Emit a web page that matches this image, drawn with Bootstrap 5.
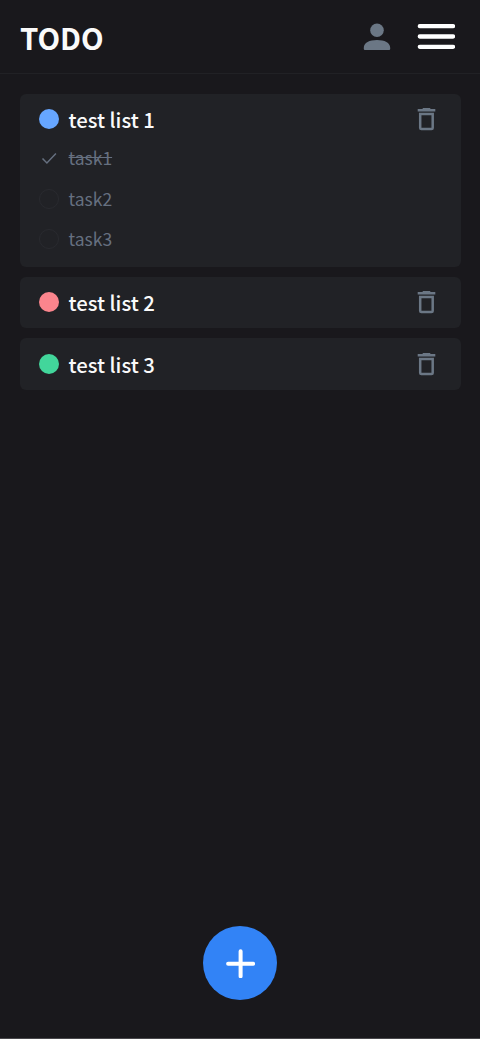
<!DOCTYPE html>
<html lang="en">
<head>
<meta charset="utf-8">
<meta name="viewport" content="width=device-width, initial-scale=1">
<title>TODO</title>
<link href="https://cdn.jsdelivr.net/npm/bootstrap@5.3.0/dist/css/bootstrap.min.css" rel="stylesheet">
<style>
body{background:#19181c;color:#fafafa;font-family:"Noto Sans CJK JP",sans-serif;line-height:1}
.app{height:1039px;border-bottom:1px solid #48474b}
.topbar{height:74px;padding:0 25px 0 20px;border-bottom:1px solid #212125}
.brand{font-size:29.4px;font-weight:700;line-height:40px;margin-top:1px}
.lists{padding:20px 19px 0 20px;gap:10px}
.todo{background:#212226;border-radius:6px;padding:0 22px 0 19px}
.todo-head{height:51px;gap:9.5px}
.todo-last,.todo-last .todo-head{height:52px}
.todo-title{font-size:20.3px;font-weight:500;line-height:30px;margin-top:-1px}
.todo-last .todo-title{margin-top:0}
.dot{width:20px;height:20px;border-radius:50%;flex:none}
.todo-head .dot{margin-top:-1px}
.ring{border:1px solid #292a2f}
.task{height:40.5px;gap:9.5px;font-size:17.500px;color:#667080}
.task-text{line-height:28px}
.trash{color:#6b7785;margin-top:-3px}
.fab{width:74px;height:74px;background:#3283f6;margin-bottom:38px}
.fab:hover{background:#3283f6}
</style>
</head>
<body>
<div class="app d-flex flex-column">
  <header class="topbar d-flex align-items-center justify-content-between">
    <h1 class="brand mb-0">TODO</h1>
    <div class="d-flex align-items-center">
      <svg width="28" height="28" viewBox="0 0 28 28" fill="#6b7785" style="margin-right:26px" aria-label="Account"><circle cx="14" cy="7.2" r="6.8"/><path d="M.8 24.8C.8 19.7 6.5 17 14 17s13.200 2.700 13.200 7.800v1.100q0 1.100-1.100 1.100H1.900q-1.100 0-1.100-1.100z"/></svg>
      <svg width="38" height="28" viewBox="0 0 38 28" stroke="#fff" stroke-width="4.300" stroke-linecap="round" aria-label="Menu"><path d="M2.800 3.200h33.200M2.800 13.500h33.200M2.800 23.800h33.200"/></svg>
    </div>
  </header>
  <main class="lists d-flex flex-column flex-grow-1">
    <section class="todo" style="height:173px">
      <div class="todo-head d-flex align-items-center">
        <span class="dot" style="background:#66a6ff"></span><h2 class="todo-title mb-0 flex-grow-1">test list 1</h2>
        <svg class="trash" width="24" height="26" viewBox="0 0 24 26" fill="none" stroke="currentColor" stroke-width="2.500"><path d="M5.200 8.900h12.500v14q0 1.200-1.200 1.200H6.400q-1.200 0-1.200-1.200z"/><path d="M2.700 5.300h17.600M7.700 4.300h7.600"/></svg>
      </div>
      <div style="margin-top:-7px">
        <div class="task d-flex align-items-center"><svg width="20" height="20" viewBox="0 0 20 20" fill="none" stroke="currentColor" stroke-width="1.500"><path d="M3.500 10.400l4.400 4.500 9-9.500"/></svg><span class="task-text"><s>task1</s></span></div>
        <div class="task d-flex align-items-center"><span class="dot ring"></span><span class="task-text">task2</span></div>
        <div class="task d-flex align-items-center"><span class="dot ring"></span><span class="task-text">task3</span></div>
      </div>
    </section>
    <section class="todo">
      <div class="todo-head d-flex align-items-center">
        <span class="dot" style="background:#fb858d"></span><h2 class="todo-title mb-0 flex-grow-1">test list 2</h2>
        <svg class="trash" width="24" height="26" viewBox="0 0 24 26" fill="none" stroke="currentColor" stroke-width="2.500"><path d="M5.200 8.900h12.500v14q0 1.200-1.200 1.200H6.400q-1.200 0-1.200-1.200z"/><path d="M2.700 5.300h17.600M7.700 4.300h7.600"/></svg>
      </div>
    </section>
    <section class="todo todo-last">
      <div class="todo-head d-flex align-items-center">
        <span class="dot" style="background:#42d69b"></span><h2 class="todo-title mb-0 flex-grow-1">test list 3</h2>
        <svg class="trash" width="24" height="26" viewBox="0 0 24 26" fill="none" stroke="currentColor" stroke-width="2.500"><path d="M5.200 8.900h12.500v14q0 1.200-1.200 1.200H6.400q-1.200 0-1.200-1.200z"/><path d="M2.700 5.300h17.600M7.700 4.300h7.600"/></svg>
      </div>
    </section>
  </main>
  <button type="button" class="fab btn rounded-circle border-0 p-0 mx-auto d-flex align-items-center justify-content-center" aria-label="Add list">
    <svg width="30" height="30" viewBox="0 0 30 30" stroke="#fff" stroke-width="4" stroke-linecap="round"><path d="M15.600 3.200v25M3.100 15.700h25"/></svg>
  </button>
</div>
<script src="https://cdn.jsdelivr.net/npm/bootstrap@5.3.0/dist/js/bootstrap.bundle.min.js"></script>
</body>
</html>
